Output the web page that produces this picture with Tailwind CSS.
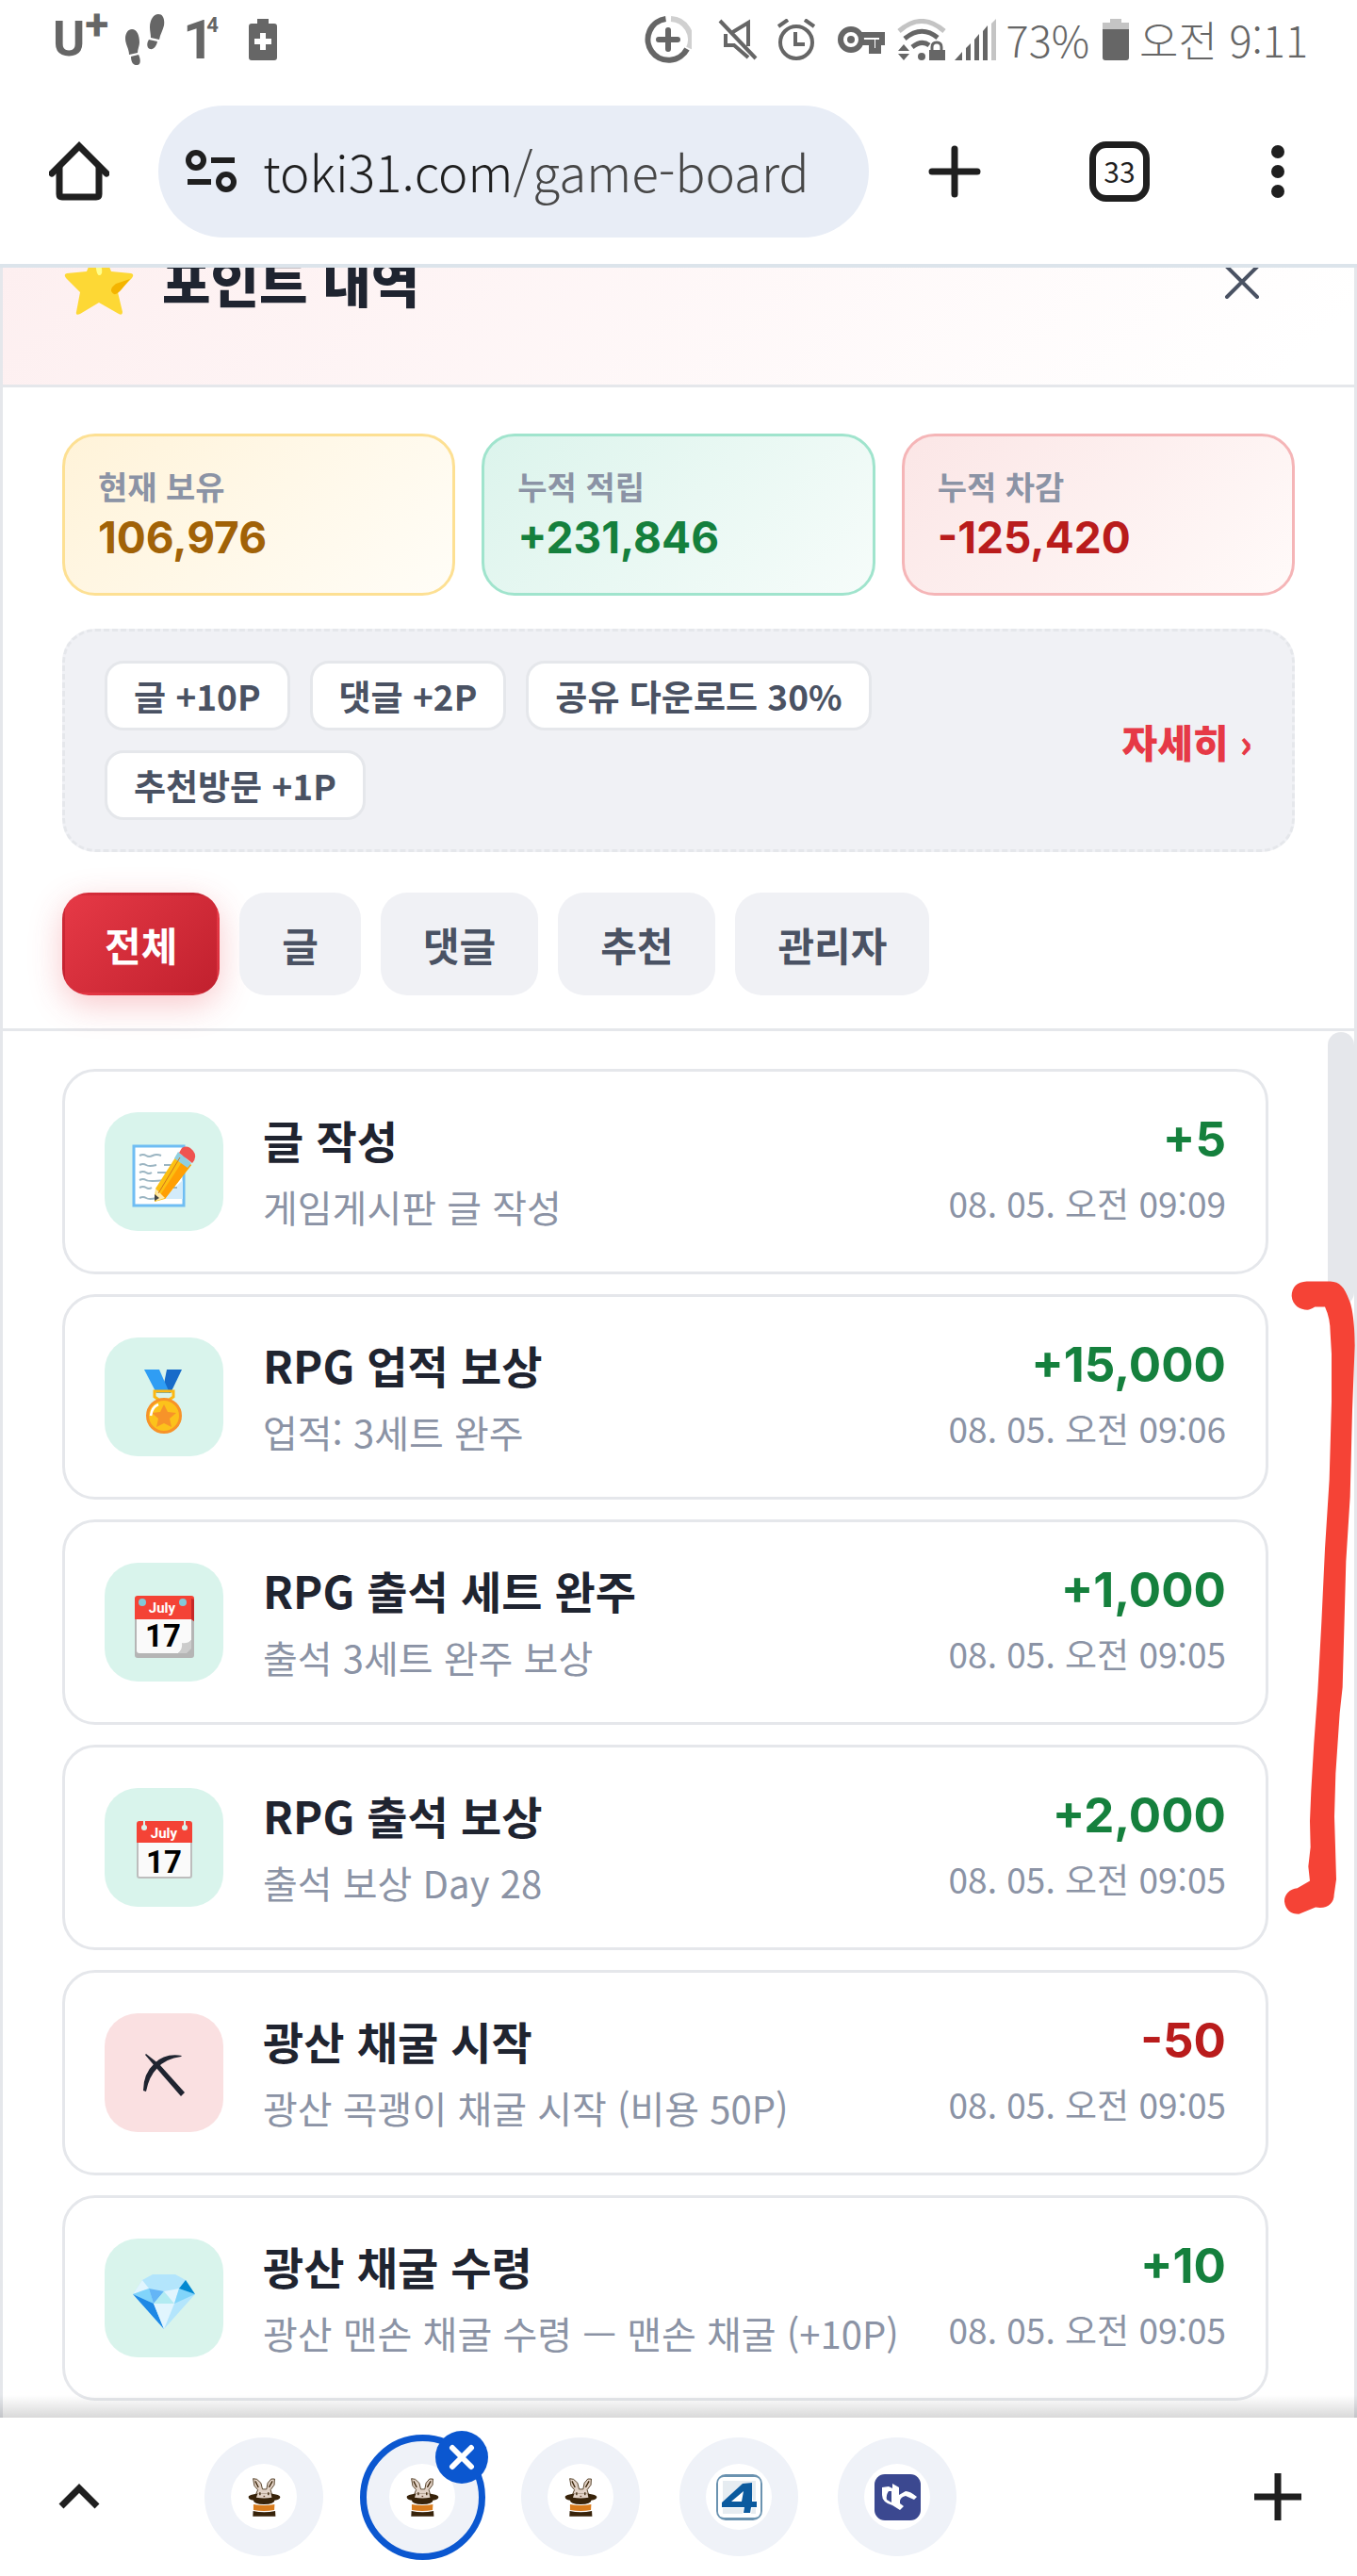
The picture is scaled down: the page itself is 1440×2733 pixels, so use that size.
<!DOCTYPE html>
<html lang="ko">
<head>
<meta charset="utf-8">
<meta name="viewport" content="width=device-width, initial-scale=1">
<title>포인트 내역</title>
<script src="https://cdn.jsdelivr.net/npm/@tailwindcss/browser@4"></script>
</head>
<body class="flex min-h-screen flex-col bg-white font-['Noto_Sans_CJK_KR',sans-serif] text-[#1f2430]">

<svg class="hidden" aria-hidden="true">
  <symbol id="rabbit" viewBox="214 206 106 124">
    <path d="M231 208 L243 210 L256 222 L261 242 L274 242 L278 222 L289 209 L300 209 L299 228 L287 244 L291 258 L287 270 L245 270 L241 256 L246 244 L235 231 Z" fill="#e2d2c6" stroke="#3a2408" stroke-width="2.5"/>
    <path d="M238 216 L248 236 M293 216 L282 236" stroke="#3a2408" stroke-width="4"/>
    <path d="M230 259 Q266 250 304 259 Q318 262 318 268 Q318 275 300 278 Q300 290 266 291 Q232 290 232 278 Q216 275 216 267 Q216 262 230 259 Z" fill="#38230a"/>
    <path d="M241 269 L246 255 L288 255 L291 269 Q266 273 241 269 Z" fill="#e2d2c6"/>
    <rect x="251" y="252" width="4" height="9" fill="#3a2408"/><rect x="278" y="252" width="4" height="9" fill="#3a2408"/><rect x="264" y="263" width="5" height="4" fill="#6b4a35"/>
    <path d="M232 291 Q266 297 300 291 L299 309 Q266 315 232 309 Z" fill="#d97c1e"/>
    <path d="M231 312 Q266 320 302 312 L303 329 L230 329 Z" fill="#38230a"/>
  </symbol>
</svg>

<div class="flex h-[84px] items-center justify-between pr-[52px] pl-[56px] text-[#666]">
  <div class="flex items-center">
    <span class="flex w-[72px] items-start font-[Roboto,sans-serif] text-[52px] leading-[60px] font-bold">U<span class="-mt-2 text-[46px] leading-[44px]">+</span></span>
    <svg class="ml-[4px] h-[54px] w-[44px]" viewBox="0 0 44 54" fill="currentColor"><path d="M8 16c5 0 8 6 8 14 0 4-2 7-2 11L5 43C5 37 1 32 1 26c0-6 3-10 7-10zM7 45l8-2c2 4 3 10-1 11-5 1-7-4-7-9zM36 0c5 0 7 5 6 12-1 5-4 9-5 15l-9-2c0-4-1-7-1-11 0-8 4-14 9-14zM26 27l9 2c-1 5-4 9-8 8-4-2-3-7-1-10z"/></svg>
    <span class="ml-[18px] flex w-[44px] items-start font-[Roboto,sans-serif] text-[58px] leading-[60px] font-bold">1<span class="-ml-[8px] text-[22px] leading-[30px]">4</span></span>
    <svg class="ml-[26px] h-[44px] w-[30px]" viewBox="0 0 30 44"><path d="M9 0h12v5h6q3 0 3 3v33q0 3-3 3H3q-3 0-3-3V8q0-3 3-3h6z" fill="currentColor"/><path d="M15 15v18M6 24h18" stroke="#fff" stroke-width="6"/></svg>
  </div>
  <div class="flex items-center text-[45px] leading-[60px] font-light">
    <svg class="h-[50px] w-[50px]" viewBox="0 0 50 50" fill="none" stroke="currentColor"><path d="M22.500 3A22 22 0 1 0 45 35" stroke-width="6"/><path d="M28 3A22 22 0 0 1 47 34" stroke="#d0d0d0" stroke-width="6"/><path d="M25 15v20M15 25h20" stroke-width="6" stroke-linecap="round"/></svg>
    <svg class="ml-[28px] h-[44px] w-[42px]" viewBox="0 0 42 44" fill="none" stroke="currentColor" stroke-width="4"><path d="M2 2l38 40M14 15L32 4v25M8 16v12h9l15 13"/></svg>
    <svg class="ml-[21px] h-[44px] w-[40px]" viewBox="0 0 40 44" fill="none" stroke="currentColor" stroke-width="4"><circle cx="20" cy="25" r="17"/><path d="M19 14v13h10M1 8l10-7M29 1l10 7"/></svg>
    <svg class="ml-[24px] h-[30px] w-[50px]" viewBox="0 0 50 30" fill="none" stroke="currentColor"><path d="M24 10h23v8h-4v9h-7v-9H24" stroke-width="6"/><circle cx="14" cy="15" r="11" stroke-width="6"/><circle cx="14" cy="15" r="4" fill="currentColor" stroke="none"/></svg>
    <svg class="ml-[13px] h-[44px] w-[52px]" viewBox="0 0 52 44" fill="none" stroke="currentColor" stroke-width="5"><path d="M2 13Q26-8 50 13" stroke="#c4c4c4"/><path d="M8 21Q26 6 43 20"/><path d="M16 30Q26 22 34 28"/><circle cx="26" cy="40" r="4" fill="currentColor" stroke="none"/><path d="M1 34l6-7 6 7zM1 37l6 7 6-7zM34 33h17v11H34z" fill="currentColor" stroke="none"/><path d="M37 34v-4q0-5 5-5t5 5v4" stroke-width="3"/></svg>
    <svg class="ml-[9px] h-[44px] w-[44px]" viewBox="0 0 44 44" fill="currentColor"><path d="M0 44l8-9v9zM12 31l5-5v18h-5zM21 22l5-6v28h-5zM30 13l5-6v37h-5z"/><path d="M39 5l5-5v44h-5z" fill="#c4c4c4"/></svg>
    <span class="ml-[11px]">73%</span>
    <svg class="ml-[14px] h-[44px] w-[28px]" viewBox="0 0 28 44"><path d="M8 0h12v4h8v8H0V4h8z" fill="#c4c4c4"/><path d="M0 11h28v30q0 3-3 3H3q-3 0-3-3z" fill="currentColor"/></svg>
    <span class="ml-[11px]">오전 9:11</span>
  </div>
</div>

<nav class="flex h-[200px] items-center border-b-4 border-[#dce4eb] pl-[52px] text-[#1f1f1f]">
  <button aria-label="홈" class="mr-[52px]"><svg class="h-[64px] w-[64px]" viewBox="0 0 64 64" fill="none" stroke="currentColor" stroke-width="7"><path d="M3 34L32 5l29 29" stroke-linecap="round"/><path d="M11 27v29q0 3 3 3h36q3 0 3-3V27"/></svg></button>
  <button class="flex h-[140px] flex-1 items-center rounded-full bg-[#e8edf6] pl-[29px] text-left">
    <svg class="h-[46px] w-[54px]" viewBox="0 0 54 46" fill="none" stroke="currentColor" stroke-width="6"><circle cx="11" cy="11" r="8"/><path d="M27 11h25M2 34h25"/><circle cx="43" cy="34" r="8"/></svg>
    <span class="ml-[28px] pb-[2px] text-[53px] leading-[72px] font-light whitespace-nowrap">toki31.com<span class="text-[#474747]">/game-board</span></span>
  </button>
  <button aria-label="새 탭" class="ml-[7px] flex w-[168px] justify-center"><svg class="h-[56px] w-[56px]" viewBox="0 0 56 56" stroke="currentColor" stroke-width="7" stroke-linecap="round"><path d="M28 4v48M4 28h48"/></svg></button>
  <button aria-label="탭 33개" class="ml-[7px] flex w-[168px] justify-center"><span class="flex h-[64px] w-[64px] items-center justify-center rounded-[18px] border-7 border-current pb-[2px] text-[30px] leading-[40px]">33</span></button>
  <button aria-label="메뉴" class="flex w-[168px] justify-center"><svg class="h-[56px] w-[14px]" viewBox="0 0 14 56" fill="currentColor"><circle cx="7" cy="7" r="7"/><circle cx="7" cy="28" r="7"/><circle cx="7" cy="49" r="7"/></svg></button>
</nav>

<div class="relative flex-1">
<main class="overflow-hidden border-x-3 border-[#e5e7eb]">
  <header class="-mt-[94px] flex h-[221px] items-center border-b-3 border-[#e5e7eb] bg-linear-135 from-[#fdeeef] to-white to-95% pr-[98px] pl-[65px]">
    <svg class="h-[74px] w-[74px]" viewBox="0 0 74 74"><path d="M37 1q3 0 5 5l8 20 21 2q4 1 1 5L57 48l5 21q0 4-4 2L37 59 17 71q-5 2-4-2l4-21L2 33q-3-4 1-5l21-2 8-20q2-5 5-5z" fill="#fdd835"/><path d="M40 23l-4-14q-3 3-2 14 1 8 4 7 3-1 2-7z" fill="#ffff8d"/><path d="M70 34L55 39q-9 7-2 11 3 1 8-5z" fill="#f4b400"/></svg>
    <h1 class="ml-[30px] flex-1 pb-[5px] text-[56px] leading-[80px] font-black">포인트 내역</h1>
    <button aria-label="닫기" class="text-[#4a5263]"><svg class="h-[42px] w-[42px]" viewBox="0 0 42 42" stroke="currentColor" stroke-width="4" stroke-linecap="round"><path d="M5 5l32 32M37 5L5 37"/></svg></button>
  </header>

  <section class="border-b-3 border-[#e5e7eb] px-[63px] pt-[49px] pb-[35px]">
    <dl class="grid grid-cols-3 gap-[28px] font-bold">
      <div class="h-[172px] rounded-[35px] border-3 border-[#fde093] bg-linear-135 from-[#fff3d9] to-[#fffdf7] px-[35px] pt-[26px]">
        <dt class="text-[34px] leading-[54px] text-[#8b93a5]">현재 보유</dt>
        <dd class="font-[Inter,sans-serif] text-[46px] leading-[54px] text-[#a16207]">106,976</dd>
      </div>
      <div class="h-[172px] rounded-[35px] border-3 border-[#a0e4cd] bg-linear-135 from-[#dcf4ec] to-[#f6fcfa] px-[35px] pt-[26px]">
        <dt class="text-[34px] leading-[54px] text-[#8b93a5]">누적 적립</dt>
        <dd class="font-[Inter,sans-serif] text-[46px] leading-[54px] text-[#15803d]">+231,846</dd>
      </div>
      <div class="h-[172px] rounded-[35px] border-3 border-[#f5b5b7] bg-linear-135 from-[#fbe6e6] to-[#fffaf9] px-[35px] pt-[26px]">
        <dt class="text-[34px] leading-[54px] text-[#8b93a5]">누적 차감</dt>
        <dd class="font-[Inter,sans-serif] text-[46px] leading-[54px] text-[#b91c1c]">-125,420</dd>
      </div>
    </dl>

    <div class="mt-[35px] flex items-center justify-between rounded-[35px] border-3 border-dashed border-[#e5e7eb] bg-[#f0f1f5] px-[42px] py-[31px]">
      <ul class="flex max-w-[900px] flex-wrap gap-[21px] text-[37px] leading-[68px] font-semibold text-[#4a5263]">
        <li class="rounded-[20px] border-3 border-[#e5e7eb] bg-white px-[28px]">글 +10P</li>
        <li class="rounded-[20px] border-3 border-[#e5e7eb] bg-white px-[28px]">댓글 +2P</li>
        <li class="rounded-[20px] border-3 border-[#e5e7eb] bg-white px-[28px]">공유 다운로드 30%</li>
        <li class="rounded-[20px] border-3 border-[#e5e7eb] bg-white px-[28px]">추천방문 +1P</li>
      </ul>
      <a href="#" class="text-[41px] leading-[60px] font-extrabold whitespace-nowrap text-[#e63946]">자세히 ›</a>
    </div>

    <div class="mt-[43px] flex gap-[21px] text-[42px] leading-[103px] font-bold text-[#4a5263]">
      <button class="rounded-[28px] border-3 border-transparent bg-linear-135 from-[#e63946] to-[#c1202e] px-[42px] text-white shadow-[0_10px_35px_rgba(230,57,70,0.28)]">전체</button>
      <button class="rounded-[28px] border-3 border-transparent bg-[#f0f1f5] px-[42px]">글</button>
      <button class="rounded-[28px] border-3 border-transparent bg-[#f0f1f5] px-[42px]">댓글</button>
      <button class="rounded-[28px] border-3 border-transparent bg-[#f0f1f5] px-[42px]">추천</button>
      <button class="rounded-[28px] border-3 border-transparent bg-[#f0f1f5] px-[42px]">관리자</button>
    </div>
  </section>

  <section class="relative pt-[40px] pr-[91px] pb-[18px] pl-[63px]">
    <div class="absolute top-px right-0 h-[290px] w-[28px] rounded-full bg-[#e5e7eb]"></div>
    <ul class="flex flex-col gap-[21px]">
      <li class="flex h-[218px] items-center rounded-[35px] border-3 border-[#e5e7eb] px-[42px]">
        <svg class="h-[126px] w-[126px] rounded-[35px] bg-[#d9f4ec]" viewBox="0 0 126 126"><path d="M31 36h53v63H31z" fill="#fff" stroke="#6fbdf3" stroke-width="3"/><path d="M83 72v20H62z" fill="#d3ebfa"/><path d="M37 46q4-2 7 0t7 0 9 0M37 56q4-2 7 0t11 0M63 56h10M37 64q4-2 7 0t6 0M56 64h10M37 72q4-2 7 0t20 0M37 80q4-2 7 0t6 0M55 80h22M37 91q4-2 7 0t11 0" fill="none" stroke="#9bb5c2" stroke-width="2"/><path d="M77 45l15 11-28 36-11 3 1-14z" fill="#fcc012"/><path d="M92 56L64 92l-5-4 25-38z" fill="#ff9f04"/><path d="M54 81l10 10-9 3z" fill="#ffe9a8"/><path d="M53 87l5 4-5 3z" fill="#444"/><path d="M78 42l14 12-4 5-14-10z" fill="#90cfe0"/><path d="M82 38q6-4 12 3 5 6-1 13L79 43z" fill="#ef5350"/><path d="M80 48L57 86" stroke="#d0761d"/></svg>
        <div class="ml-[42px] min-w-0 flex-1">
          <h2 class="text-[47px] leading-[74px] font-bold">글 작성</h2>
          <p class="text-[40px] leading-[68px] text-[#8b93a5]">게임게시판 글 작성</p>
        </div>
        <div class="pb-[8px] text-right">
          <p class="font-[Inter,sans-serif] text-[51px] leading-[74px] font-bold text-[#15803d]">+5</p>
          <p class="text-[37px] leading-[60px] text-[#8b93a5]">08. 05. 오전 09:09</p>
        </div>
      </li>
      <li class="flex h-[218px] items-center rounded-[35px] border-3 border-[#e5e7eb] px-[42px]">
        <svg class="h-[126px] w-[126px] rounded-[35px] bg-[#d9f4ec]" viewBox="0 0 126 126"><path d="M66 34h16L70 59h-9z" fill="#176bc9"/><path d="M42 34h16l11 25H55z" fill="#2f9df4"/><path d="M53 57h20v6l-6 4h-8l-6-4z" fill="none" stroke="#fcb813" stroke-width="3"/><circle cx="63" cy="83" r="17.500" fill="#fcc21b" stroke="#f79329" stroke-width="3"/><path d="M63 71l4 8 9 1-7 6 2 9-8-4-8 4 2-9-7-6 9-1z" fill="#f79329"/><path d="M49 83q1-9 8-12" fill="none" stroke="#fff" stroke-width="2.500"/></svg>
        <div class="ml-[42px] min-w-0 flex-1">
          <h2 class="text-[47px] leading-[74px] font-bold">RPG 업적 보상</h2>
          <p class="text-[40px] leading-[68px] text-[#8b93a5]">업적: 3세트 완주</p>
        </div>
        <div class="pb-[8px] text-right">
          <p class="font-[Inter,sans-serif] text-[51px] leading-[74px] font-bold text-[#15803d]">+15,000</p>
          <p class="text-[37px] leading-[60px] text-[#8b93a5]">08. 05. 오전 09:06</p>
        </div>
      </li>
      <li class="flex h-[218px] items-center rounded-[35px] border-3 border-[#e5e7eb] px-[42px]">
        <svg class="h-[126px] w-[126px] rounded-[35px] bg-[#d9f4ec]" viewBox="0 0 126 126"><rect x="32" y="36" width="63" height="65" rx="3" fill="#b5b5b5"/><path d="M34 60h58v22L78 96H37q-3 0-3-3z" fill="#fafafa"/><path d="M78 96q5-4 4-11 6 1 10-3v9l-5 5z" fill="#ccc"/><path d="M32 60V38q0-3 3-3h57q3 0 3 3v24l-3-2z" fill="#f44336"/><path d="M92 38l3 1v23l-3-2z" fill="#c62828"/><circle cx="40" cy="42" r="4" fill="#82c9d8"/><circle cx="83" cy="42" r="4" fill="#82c9d8"/><text x="61" y="53" text-anchor="middle" font-family="Roboto, sans-serif" font-weight="700" font-size="15" fill="#fff">July</text><text x="62" y="89" text-anchor="middle" font-family="Roboto, sans-serif" font-weight="700" font-size="33" fill="#000">17</text></svg>
        <div class="ml-[42px] min-w-0 flex-1">
          <h2 class="text-[47px] leading-[74px] font-bold">RPG 출석 세트 완주</h2>
          <p class="text-[40px] leading-[68px] text-[#8b93a5]">출석 3세트 완주 보상</p>
        </div>
        <div class="pb-[8px] text-right">
          <p class="font-[Inter,sans-serif] text-[51px] leading-[74px] font-bold text-[#15803d]">+1,000</p>
          <p class="text-[37px] leading-[60px] text-[#8b93a5]">08. 05. 오전 09:05</p>
        </div>
      </li>
      <li class="flex h-[218px] items-center rounded-[35px] border-3 border-[#e5e7eb] px-[42px]">
        <svg class="h-[126px] w-[126px] rounded-[35px] bg-[#d9f4ec]" viewBox="0 0 126 126"><rect x="35" y="50" width="57" height="45" rx="2" fill="#fafafa" stroke="#bdbdbd" stroke-width="2"/><path d="M34 58V38q0-3 3-3h53q3 0 3 3v20z" fill="#f44336"/><circle cx="42" cy="42" r="3" fill="#d9f4ec"/><circle cx="85" cy="42" r="3" fill="#d9f4ec"/><path d="M42 35v6M85 35v6" stroke="#d9f4ec" stroke-width="2"/><text x="63" y="53" text-anchor="middle" font-family="Roboto, sans-serif" font-weight="700" font-size="15" fill="#fff">July</text><text x="63" y="90" text-anchor="middle" font-family="Roboto, sans-serif" font-weight="700" font-size="33" fill="#000">17</text></svg>
        <div class="ml-[42px] min-w-0 flex-1">
          <h2 class="text-[47px] leading-[74px] font-bold">RPG 출석 보상</h2>
          <p class="text-[40px] leading-[68px] text-[#8b93a5]">출석 보상 Day 28</p>
        </div>
        <div class="pb-[8px] text-right">
          <p class="font-[Inter,sans-serif] text-[51px] leading-[74px] font-bold text-[#15803d]">+2,000</p>
          <p class="text-[37px] leading-[60px] text-[#8b93a5]">08. 05. 오전 09:05</p>
        </div>
      </li>
      <li class="flex h-[218px] items-center rounded-[35px] border-3 border-[#e5e7eb] px-[42px]">
        <svg class="h-[126px] w-[126px] rounded-[35px] bg-[#fae0e1]" viewBox="0 0 126 126" fill="#1f2430"><path d="M44 43l14 11 27 30-4 4-27-31-11-13z"/><path d="M82 45Q64 42 53 53 41 64 41 82l3 1q3-16 12-25 9-10 25-12z"/></svg>
        <div class="ml-[42px] min-w-0 flex-1">
          <h2 class="text-[47px] leading-[74px] font-bold">광산 채굴 시작</h2>
          <p class="text-[40px] leading-[68px] text-[#8b93a5]">광산 곡괭이 채굴 시작 (비용 50P)</p>
        </div>
        <div class="pb-[8px] text-right">
          <p class="font-[Inter,sans-serif] text-[51px] leading-[74px] font-bold text-[#b91c1c]">-50</p>
          <p class="text-[37px] leading-[60px] text-[#8b93a5]">08. 05. 오전 09:05</p>
        </div>
      </li>
      <li class="flex h-[218px] items-center rounded-[35px] border-3 border-[#e5e7eb] px-[42px]">
        <svg class="h-[126px] w-[126px] rounded-[35px] bg-[#d9f4ec]" viewBox="0 0 126 126"><path d="M51 38h24l11 6 10 15-33 37-33-37 10-15z" fill="#b3e5fc"/><path d="M30 59l10-15 7 9z" fill="#e1f5fe"/><path d="M30 59l17-6 5 16z" fill="#81d4fa"/><path d="M47 53l16 3-11 13z" fill="#64b5f6"/><path d="M63 56l11 13H52z" fill="#b2ebf2"/><path d="M79 53l-5 16-11-13z" fill="#e1f5fe"/><path d="M79 53l17 6-22 10z" fill="#81d4fa"/><path d="M86 44l10 15-17-6z" fill="#0288d1"/><path d="M30 59l22 10 11 27z" fill="#1e88e5"/><path d="M52 69h22L63 96z" fill="#e1f5fe"/></svg>
        <div class="ml-[42px] min-w-0 flex-1">
          <h2 class="text-[47px] leading-[74px] font-bold">광산 채굴 수령</h2>
          <p class="text-[40px] leading-[68px] whitespace-nowrap text-[#8b93a5]">광산 맨손 채굴 수령 — 맨손 채굴 (+10P)</p>
        </div>
        <div class="pb-[8px] text-right">
          <p class="font-[Inter,sans-serif] text-[51px] leading-[74px] font-bold text-[#15803d]">+10</p>
          <p class="text-[37px] leading-[60px] whitespace-nowrap text-[#8b93a5]">08. 05. 오전 09:05</p>
        </div>
      </li>
    </ul>
  </section>
</main>
<svg class="pointer-events-none absolute top-[1070px] right-0 h-[680px] w-[80px]" viewBox="1200 30 240 1482" preserveAspectRatio="none" fill="#f54336" aria-hidden="true"><path d="M1280 42C1250 43 1232 55 1232 76 1234 98 1260 108 1282 108 1296 107 1302 101 1308 101H1338C1350 120 1355 140 1355 160L1359 210V320L1352 500 1338 660 1327 830 1315 990 1303 1110 1294 1220 1290 1290 1292 1350 1285 1395 1290 1428 1250 1445C1225 1447 1208 1460 1209 1476 1212 1495 1230 1505 1255 1505L1308 1489C1345 1494 1367 1480 1367 1460L1374 1425 1371 1350 1368 1280 1372 1180 1385 1040 1394 980 1405 690 1418 540 1425 340 1433 190C1433 140 1425 100 1415 85 1400 55 1385 43 1355 42Z"/></svg>
<div class="pointer-events-none absolute inset-x-0 bottom-0 h-[24px] bg-linear-to-b from-black/0 to-black/15"></div>
</div>

<footer class="flex h-[168px] items-center bg-white text-[#1f1f1f]">
  <button aria-label="펼치기" class="mr-[28px] flex w-[168px] justify-center"><svg class="h-[28px] w-[44px]" viewBox="0 0 44 28" fill="none" stroke="currentColor" stroke-width="7"><path d="M3 24L22 5l19 19"/></svg></button>
  <div class="flex w-[168px] justify-center"><button aria-label="탭 1" class="flex h-[126px] w-[126px] items-center justify-center rounded-full bg-[#eff2f8]"><span class="flex h-[70px] w-[70px] items-center justify-center rounded-full bg-white"><svg class="h-[41px] w-[35px]"><use href="#rabbit"/></svg></span></button></div>
  <div class="relative flex w-[168px] justify-center"><button aria-label="탭 2" class="flex h-[133px] w-[133px] items-center justify-center rounded-full border-7 border-[#0b57d0] bg-[#eff2f8]"><span class="flex h-[70px] w-[70px] items-center justify-center rounded-full bg-white"><svg class="h-[41px] w-[35px]"><use href="#rabbit"/></svg></span></button>
    <button aria-label="탭 닫기" class="absolute -top-[4px] right-[14px] flex h-[56px] w-[56px] items-center justify-center rounded-full bg-[#0b57d0]"><svg class="h-[28px] w-[28px]" viewBox="0 0 28 28" stroke="#fff" stroke-width="6" stroke-linecap="round"><path d="M4 4l20 20M24 4L4 24"/></svg></button></div>
  <div class="flex w-[168px] justify-center"><button aria-label="탭 3" class="flex h-[126px] w-[126px] items-center justify-center rounded-full bg-[#eff2f8]"><span class="flex h-[70px] w-[70px] items-center justify-center rounded-full bg-white"><svg class="h-[41px] w-[35px]"><use href="#rabbit"/></svg></span></button></div>
  <div class="flex w-[168px] justify-center"><button aria-label="탭 4" class="flex h-[126px] w-[126px] items-center justify-center rounded-full bg-[#eff2f8]"><span class="flex h-[70px] w-[70px] items-center justify-center rounded-full bg-white"><svg class="h-[49px] w-[49px]" viewBox="0 0 49 49"><rect width="49" height="49" rx="10" fill="#6b93b0"/><rect x="2" y="3" width="45" height="43" rx="6" fill="#fff"/><rect x="7" y="7" width="35" height="35" fill="#e6ecf1"/><path d="M36 9L6 29v7h23l-1 6h9l1-6h6v-8h-5z" fill="#fff"/><path d="M38 9L28 10 6 30v5h24l-1 6h7l1-6h6v-6h-5zM29 18l-2 11H16z" fill="#0b5a9e" fill-rule="evenodd"/></svg></span></button></div>
  <div class="flex w-[168px] justify-center"><button aria-label="탭 5" class="flex h-[126px] w-[126px] items-center justify-center rounded-full bg-[#eff2f8]"><span class="flex h-[70px] w-[70px] items-center justify-center rounded-full bg-white"><svg class="h-[49px] w-[49px]" viewBox="0 0 49 49"><rect width="49" height="49" rx="11" fill="#3b4890"/><path d="M19 10l7 4v8l7-4q5 0 12 6l-3 3-9-4q-5 1-6 5v3l4 3-4 4-8-5q-11-3-11-11V14l7-1 4 2zM15 18q-3 4-2 9l5 3V18z" fill="#fff" fill-rule="evenodd"/></svg></span></button></div>
  <div class="flex-1"></div>
  <button aria-label="새 탭" class="flex w-[168px] justify-center"><svg class="h-[50px] w-[50px]" viewBox="0 0 50 50" stroke="currentColor" stroke-width="7"><path d="M25 0v50M0 25h50"/></svg></button>
</footer>
</body>
</html>
